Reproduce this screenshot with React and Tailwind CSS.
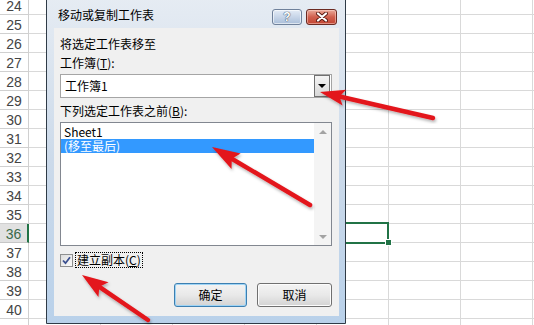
import React from 'react';

const ROWS = Array.from({ length: 18 }, (_, i) => 24 + i);
const COLS = [0, 1, 2, 3, 4, 5, 6, 7];
const CJK = "font-['Noto_Sans_CJK_SC',sans-serif]";

function SheetGrid() {
  return (
    <div className="-mt-[4px]">
      {ROWS.map(n => (
        <div key={n} className="flex h-[19px]">
          <div
            className={`w-[29px] shrink-0 border-b border-r text-center pt-[2px] leading-[16px] text-[14px] font-['Liberation_Sans',sans-serif] ${
              n === 36
                ? 'bg-[#e1e1e1] border-b-[#c6c6c6] border-r-2 border-r-[#217346] text-[#3a6a4a]'
                : 'border-[#d0d0d0] text-[#444]'
            }`}
          >
            {n < 41 ? n : ''}
          </div>
          {COLS.map(c => (
            <div key={c} className="w-[72px] shrink-0 border-b border-r border-[#d9d9d9]" />
          ))}
        </div>
      ))}
    </div>
  );
}

function Arrow({ from, to, head = 26, half = 9 }) {
  const dx = to[0] - from[0];
  const dy = to[1] - from[1];
  const len = Math.hypot(dx, dy);
  const ux = dx / len, uy = dy / len;
  const bx = to[0] - ux * head, by = to[1] - uy * head;
  const nx = -uy, ny = ux;
  const notchX = bx + ux * 5, notchY = by + uy * 5;
  const pts = `${to[0]},${to[1]} ${bx + nx * half},${by + ny * half} ${notchX},${notchY} ${bx - nx * half},${by - ny * half}`;
  return (
    <g filter="url(#shadow)">
      <line x1={from[0]} y1={from[1]} x2={notchX} y2={notchY} stroke="#e3161b" strokeWidth="4.5" strokeLinecap="round" />
      <polygon points={pts} fill="#e3161b" />
    </g>
  );
}

function Arrows() {
  return (
    <svg className="absolute left-0 top-0 pointer-events-none" width="534" height="325">
      <defs>
        <filter id="shadow" x="-20%" y="-20%" width="140%" height="140%">
          <feDropShadow dx="1" dy="2" stdDeviation="1.5" floodColor="#000" floodOpacity="0.3" />
        </filter>
      </defs>
      <Arrow from={[433, 118]} to={[320, 92]} head={25} half={8} />
      <Arrow from={[310, 205]} to={[212, 147]} head={28} half={9} />
      <Arrow from={[148, 320]} to={[82, 275]} head={26} half={9} />
    </svg>
  );
}

function TitleButtons() {
  return (
    <div className="flex gap-[4px] mt-[14px]">
      <div className="w-[30px] h-[16px] rounded-[3px] border border-[#6f819b] bg-linear-to-b from-[#e4ecf6] via-[#c7d5e8] to-[#a9bed9] flex items-center justify-center shadow-[inset_0_0_0_1px_rgba(255,255,255,0.6)]">
        <span className="text-white font-bold text-[12px] leading-[12px] font-['Liberation_Sans',sans-serif] [text-shadow:0_0_1px_#2a3a55,0_0_1px_#2a3a55]">?</span>
      </div>
      <div className="w-[31px] h-[16px] rounded-[3px] border border-[#6b2a22] bg-linear-to-b from-[#e9a99a] via-[#d0604e] to-[#c24533] flex items-center justify-center shadow-[inset_0_0_0_1px_rgba(255,220,210,0.5)]">
        <svg width="12" height="10" viewBox="0 0 12 10">
          <path d="M2 1.5 L10 8.5 M10 1.5 L2 8.5" stroke="#5a1a12" strokeWidth="4" strokeLinecap="round" />
          <path d="M2 1.5 L10 8.5 M10 1.5 L2 8.5" stroke="#fff" strokeWidth="2.2" strokeLinecap="round" />
        </svg>
      </div>
    </div>
  );
}

function Dialog() {
  return (
    <div className={`absolute left-[46px] top-[-6px] w-[300px] h-[330px] border border-[#2f3b47] rounded-t-[6px] bg-linear-to-b from-[#e6ecf3] via-[#ccdaea] to-[#b9d1ea] flex flex-col text-black ${CJK}`}>
      {/* title bar */}
      <div className="h-[33px] shrink-0 flex items-start justify-between pl-[11px] pr-[8px]">
        <span className="mt-[12px] text-[12px] leading-[16px]">移动或复制工作表</span>
        <TitleButtons />
      </div>

      {/* client area */}
      <div className="flex-1 ml-[7px] mr-[6px] mb-[7px] bg-[#f0f0f0] flex flex-col pt-[6px] text-[12px]">
        <div className="h-[19px] leading-[19px] pl-[6px]">将选定工作表移至</div>
        <div className="h-[19px] leading-[19px] pl-[6px]">
          工作簿(<span className="underline">T</span>):
        </div>

        <div className="mt-[2px] ml-[6px] mr-[7px] h-[24px] border border-[#a5a5a5] bg-white flex items-center justify-between">
          <span className="pl-[4px] leading-[16px]">工作簿1</span>
          <div className="mr-[1px] w-[16px] h-[22px] border border-[#707070] bg-linear-to-b from-[#f4f4f4] to-[#d8d8d8] flex items-center justify-center">
            <div className="w-0 h-0 border-x-[4px] border-x-transparent border-t-[4px] border-t-black" />
          </div>
        </div>

        <div className="mt-[3px] h-[19px] leading-[19px] pl-[6px]">
          下列选定工作表之前(<span className="underline">B</span>):
        </div>

        <div className="mt-[2px] ml-[6px] mr-[7px] h-[124px] border border-[#828790] bg-white flex">
          <div className="flex-1 pt-[2px]">
            <div className="h-[14px] leading-[14px] pl-[3px]">Sheet1</div>
            <div className="h-[14px] leading-[14px] pl-[3px] bg-[#3399ff] text-white">(移至最后)</div>
          </div>
          <div className="w-[17px] bg-[#f4f4f4] flex flex-col justify-between">
            <div className="h-[17px] flex items-center justify-center">
              <div className="w-0 h-0 border-x-[4px] border-x-transparent border-b-[4px] border-b-[#a3a3a3]" />
            </div>
            <div className="h-[17px] flex items-center justify-center">
              <div className="w-0 h-0 border-x-[4px] border-x-transparent border-t-[4px] border-t-[#a3a3a3]" />
            </div>
          </div>
        </div>

        <div className="mt-[6px] h-[16px] flex items-center pl-[6px]">
          <div className="w-[13px] h-[13px] border border-[#8e8f8f] bg-linear-to-br from-[#dcdcdc] to-[#fbfbfb] flex items-center justify-center">
            <svg width="9" height="9" viewBox="0 0 9 9">
              <path d="M1 4.5 L3.5 7.2 L8 1.2" stroke="#3a4f8f" strokeWidth="1.8" fill="none" />
            </svg>
          </div>
          <div className="ml-[2px] h-[16px] border border-dotted border-black px-[1px] leading-[14px]">
            建立副本(<span className="underline">C</span>)
          </div>
        </div>

        <div className="mt-[15px] flex justify-end gap-[10px] pr-[7px]">
          <button className="w-[73px] h-[24px] rounded-[3px] border border-[#3c7fb1] bg-linear-to-b from-[#f3f3f3] via-[#e9e9e9] to-[#d3d3d3] shadow-[inset_0_0_0_1px_#9fd4f5] text-[12px] leading-[16px]">
            确定
          </button>
          <button className="w-[75px] h-[24px] rounded-[3px] border border-[#707070] bg-linear-to-b from-[#f3f3f3] via-[#e9e9e9] to-[#d3d3d3] shadow-[inset_0_0_0_1px_#fcfcfc] text-[12px] leading-[16px]">
            取消
          </button>
        </div>
      </div>
    </div>
  );
}

export default function App() {
  return (
    <div className="relative w-[534px] h-[325px] overflow-hidden bg-white">
      <SheetGrid />

      {/* active cell selection */}
      <div className="absolute left-[300px] top-[222px] w-[89px] h-[22px] border-2 border-[#217346]" />
      <div className="absolute left-[385px] top-[239px] w-[7px] h-[7px] bg-[#217346] border border-white" />

      <Dialog />
      <Arrows />
    </div>
  );
}
